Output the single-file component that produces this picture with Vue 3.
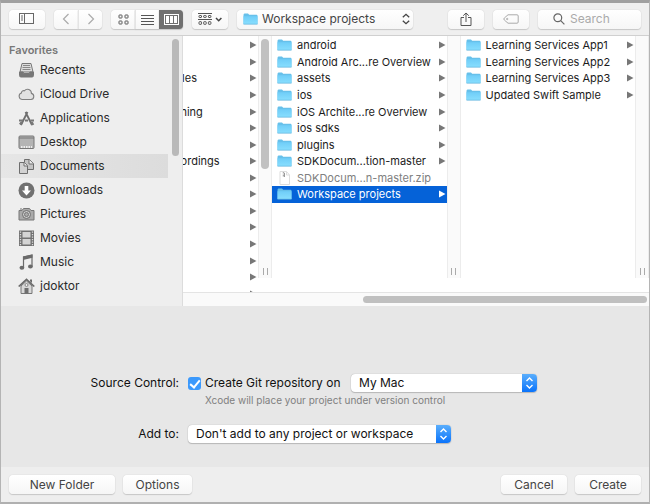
<script setup>
import { ref } from 'vue'

const favorites = [
  { name: 'Recents', icon: '<path d="M4 1.5h9l2 8.5H2z" fill="#ddd" stroke="#777"/><path d="M5 3.5h7M4.500 5.500h8M4.500 7.500h8" stroke="#888"/><path d="M1.500 10h3.500l1 1.500h5l1-1.500h3.500v3.500q0 1.500-1.500 1.500h-11q-1.500 0-1.500-1.500z" fill="#777" stroke="#777"/>' },
  { name: 'iCloud Drive', icon: '<path d="M4 13.500a3.300 3.300 0 0 1-.6-6.400 2.300 2.300 0 0 1 3-2.300 3.900 3.900 0 0 1 7 2.600 3.100 3.100 0 0 1-.4 6.100z" fill="#e2e2e2" stroke="#808080" stroke-width="1.100"/>' },
  { name: 'Applications', icon: '<path d="M9.500 2 3 15M7.500 2l6.500 13" stroke="#6e6e6e" stroke-width="1.800"/><path d="M1 10.500h4M7 10.500h3M12.500 10.500H16" stroke="#777" stroke-width="2"/><path d="M2 14.500 4 12M15 15l-1.500-3" stroke="#777" stroke-width="2.600"/>' },
  { name: 'Desktop', icon: '<rect x="1" y="2" width="15" height="12.500" rx="1" fill="#b4b4b4" stroke="#777"/><path d="M1 4h15" stroke="#777"/><path d="M3 13h11" stroke="#fff" stroke-width="1.500" stroke-dasharray="1.500 1"/>' },
  { name: 'Documents', icon: '<path d="M6.500 1.500h5l4 4v6h-9z" fill="#c4c4c4" stroke="#6e6e6e"/><path d="M11 1.500V6h4.500" stroke="#6e6e6e" fill="#eee"/><path d="M1.500 4.500h5l3 3v8h-8z" fill="#d2d2d2" stroke="#6e6e6e"/><path d="M6 4.500V8h3.500" stroke="#6e6e6e" fill="#eee"/>' },
  { name: 'Downloads', icon: '<circle cx="8.500" cy="8.500" r="8" fill="#717171"/><path d="M6.700 4h3.600v4.500h2.700l-4.500 5L4 8.500h2.700z" fill="#fff"/>' },
  { name: 'Pictures', icon: '<path d="M1 4.500h3l1.500-2h6l1.500 2h3v9.500H1z" fill="#aaa" stroke="#777"/><path d="M2 3h2" stroke="#777"/><circle cx="8.500" cy="8.500" r="4" fill="#ccc" stroke="#6e6e6e"/><circle cx="8.500" cy="8.500" r="2" fill="#aaa" stroke="#777"/>' },
  { name: 'Movies', icon: '<rect x="1" y="0.500" width="15" height="15.500" fill="#717171"/><path d="M4.500 2h8v5.500h-8zM4.500 9h8v5.500h-8z" fill="#d4d4d4"/><path d="M2.500 1.500v14M14.500 1.500v14" stroke="#ddd" stroke-width="1.300" stroke-dasharray="1.300 1.200"/>' },
  { name: 'Music', icon: '<path d="M5.500 13.500V3l8.500-2v11.500" stroke="#6a6a6a" stroke-width="1.200"/><path d="M5 2.600 14.500.500v3.300L5 6z" fill="#6a6a6a"/><ellipse cx="3.900" cy="13.700" rx="2.400" ry="2" fill="#6a6a6a"/><ellipse cx="12.400" cy="12.400" rx="2.400" ry="2" fill="#6a6a6a"/>' },
  { name: 'jdoktor', icon: '<path d="M3 8v7.500h11V8L8.500 3z" fill="#d8d8d8" stroke="#777"/><path d="M.7 8.500 8.500 1.300l7.800 7.200" stroke="#6a6a6a" stroke-width="1.700"/><path d="M12 1.500h2v3.500l-2-1.700z" fill="#6a6a6a"/><rect x="6.500" y="10" width="4" height="5.500" fill="#6e6e6e"/><circle cx="8.500" cy="7" r="1.500" fill="#eee" stroke="#888"/>' },
]
const activeFavorite = ref('Documents')

// This column is scrolled, so only the ends of its longer names show.
const parentRows = ['', '', 'Apples', '', 'Training', '', '', 'Recordings', '', '', '', '', '', '', '', '']

const projectRows = [
  { name: 'android' },
  { name: 'Android Arc...re Overview' },
  { name: 'assets' },
  { name: 'ios' },
  { name: 'iOS Archite...re Overview' },
  { name: 'ios sdks' },
  { name: 'plugins' },
  { name: 'SDKDocum...tion-master' },
  { name: 'SDKDocum...n-master.zip', file: true },
  { name: 'Workspace projects' },
]
const selectedProject = ref('Workspace projects')

const workspaceRows = [
  { name: 'Learning Services App1' },
  { name: 'Learning Services App2' },
  { name: 'Learning Services App3' },
  { name: 'Updated Swift Sample' },
]

const search = ref('')
const useGit = ref(true)
</script>

<template>
  <main class="dialog">
    <svg class="defs" aria-hidden="true">
      <defs>
        <linearGradient id="folderFill" x1="0" y1="0" x2="0" y2="1">
          <stop offset="0" stop-color="#6fcdf8" />
          <stop offset="1" stop-color="#88defe" />
        </linearGradient>
        <symbol id="folder" viewBox="0 0 15 12">
          <path d="M.5 2Q.5.500 1.500.500h3.500l1.200 1.300h7.300q1 0 1 1v8.200h-14z" fill="#67c0ea" />
          <path d="M.5 3.200h14v7.800h-14z" fill="url(#folderFill)" />
          <path d="M.5 11.200h14" stroke="#63b7df" stroke-width=".8" />
        </symbol>
      </defs>
    </svg>

    <header class="toolbar">
      <button class="btn tool" aria-label="Toggle sidebar">
        <svg width="16" height="12" fill="none" stroke="#666">
          <rect x=".5" y=".5" width="14" height="10" />
          <path d="M5.500.500v10" /><path d="M2 3h2M2 5h2M2 7h2" />
        </svg>
      </button>
      <div class="group">
        <button class="btn half" aria-label="Back">
          <svg width="8" height="12" fill="none" stroke="#aaa" stroke-width="1.200"><path d="M6.500 1 1.500 6l5 5" /></svg>
        </button>
        <button class="btn half" aria-label="Forward">
          <svg width="8" height="12" fill="none" stroke="#aaa" stroke-width="1.200"><path d="m1.500 1 5 5-5 5" /></svg>
        </button>
      </div>
      <div class="group">
        <button class="btn half" aria-label="Icon view">
          <svg width="11" height="11" fill="none" stroke="#555">
            <rect x="1" y="1" width="3" height="3" rx=".5" /><rect x="7" y="1" width="3" height="3" rx=".5" />
            <rect x="1" y="7" width="3" height="3" rx=".5" /><rect x="7" y="7" width="3" height="3" rx=".5" />
          </svg>
        </button>
        <button class="btn half" aria-label="List view">
          <svg width="13" height="11" stroke="#555"><path d="M0 1.500h13M0 4.500h13M0 7.500h13M0 10.500h13" /></svg>
        </button>
        <button class="btn half on" aria-label="Column view" aria-pressed="true">
          <svg width="15" height="11">
            <rect x=".5" y=".5" width="14" height="10" fill="none" stroke="#fff" />
            <path d="M2 2h3v7H2zM6 2h3v7H6zM10 2h3v7h-3z" fill="#fff" />
          </svg>
        </button>
      </div>
      <button class="btn tool" aria-label="Group items">
        <svg width="25" height="13" fill="none" stroke="#555">
          <path d="M0 .5h14M0 6.500h14" />
          <rect x="1" y="2.500" width="2.500" height="2" rx=".5" /><rect x="5.700" y="2.500" width="2.500" height="2" rx=".5" /><rect x="10.400" y="2.500" width="2.500" height="2" rx=".5" />
          <rect x="1" y="8.700" width="2.500" height="2.600" rx=".5" /><rect x="5.700" y="8.700" width="2.500" height="2.600" rx=".5" /><rect x="10.400" y="8.700" width="2.500" height="2.600" rx=".5" />
          <path d="m18 5 2.700 2.700L23.400 5" stroke="#444" stroke-width="1.500" />
        </svg>
      </button>
      <div class="location btn">
        <svg class="folder" width="15" height="12"><use href="#folder" /></svg>
        <select aria-label="Location"><option>Workspace projects</option></select>
        <svg class="updown" width="8" height="12" fill="none" stroke="#444" stroke-width="1.300"><path d="m.8 4.300 3.200-3 3.200 3M.8 7.700l3.200 3 3.200-3" /></svg>
      </div>
      <button class="btn tool share" aria-label="Share">
        <svg width="12" height="14" fill="none" stroke="#555">
          <path d="M4 5.500H1v8h10v-8H8" /><path d="M6 10V1M3.200 3.700 6 1l2.800 2.700" />
        </svg>
      </button>
      <button class="btn tool" aria-label="Tags">
        <svg width="16" height="10" fill="none" stroke="#aaa">
          <path d="M5 .8h9q1.200 0 1.200 1.200v6q0 1.200-1.200 1.200H5L1.300 6q-1-1 0-2z" /><circle cx="4.200" cy="5" r=".7" />
        </svg>
      </button>
      <label class="btn search">
        <svg width="12" height="12" fill="none" stroke="#666" stroke-width="1.200"><circle cx="4.800" cy="4.800" r="3.900" /><path d="m7.700 7.700 3.700 3.700" /></svg>
        <input v-model="search" type="text" placeholder="Search" aria-label="Search" />
      </label>
    </header>

    <section class="browser">
      <nav class="sidebar">
        <div class="places">
          <h2>Favorites</h2>
          <a
            v-for="f in favorites"
            :key="f.name"
            href="#"
            :class="{ active: f.name === activeFavorite }"
            @click.prevent="activeFavorite = f.name"
          >
            <svg width="17" height="17" fill="none" v-html="f.icon"></svg>{{ f.name }}
          </a>
        </div>
        <div class="side-track"><i></i></div>
      </nav>

      <div class="files">
        <div class="columns">
          <ul class="column parent">
            <li v-for="(name, i) in parentRows" :key="i">
              <span>{{ name }}</span>
              <svg class="arrow" width="7" height="8"><path d="M0 .5 6.500 4 0 7.500z" /></svg>
            </li>
          </ul>
          <div class="track"><i class="thumb"></i><b></b></div>
          <ul class="column">
            <li
              v-for="r in projectRows"
              :key="r.name"
              :class="{ selected: r.name === selectedProject, file: r.file }"
              @click="selectedProject = r.name"
            >
              <svg v-if="!r.file" class="folder" width="15" height="12"><use href="#folder" /></svg>
              <svg v-else class="folder" width="15" height="14" fill="none">
                <path d="M3 .5h6.500L12.500 4v9.500H3z" fill="#fff" stroke="#ddd" /><path d="M9.500.500V4h3" stroke="#ddd" />
                <path d="M6.500 1v5" stroke="#aaa" stroke-width="1.500" stroke-dasharray="1 .5" /><path d="M7.500 2v4" stroke="#999" />
              </svg>
              <span>{{ r.name }}</span>
              <svg v-if="!r.file" class="arrow" width="7" height="8"><path d="M0 .5 6.500 4 0 7.500z" /></svg>
            </li>
          </ul>
          <div class="track"><b></b></div>
          <ul class="column">
            <li v-for="r in workspaceRows" :key="r.name">
              <svg class="folder" width="15" height="12"><use href="#folder" /></svg>
              <span>{{ r.name }}</span>
              <svg class="arrow" width="7" height="8"><path d="M0 .5 6.500 4 0 7.500z" /></svg>
            </li>
          </ul>
          <div class="track"><b></b></div>
        </div>
        <div class="h-track"><i></i></div>
      </div>
    </section>

    <form class="options" @submit.prevent>
      <label class="caption" for="git">Source Control:</label>
      <div class="field">
        <input id="git" v-model="useGit" class="check" type="checkbox" />
        <label class="git-label" for="git">Create Git repository on</label>
        <div class="popup host">
          <select aria-label="Repository location"><option>My Mac</option></select>
          <svg class="stepper" width="15" height="18" fill="none" stroke="#fff" stroke-width="1.400"><path d="m4.500 7 3-3 3 3M4.500 11l3 3 3-3" /></svg>
        </div>
      </div>
      <p class="hint">Xcode will place your project under version control</p>
      <label class="caption" for="add">Add to:</label>
      <div class="popup project">
        <select id="add"><option>Don't add to any project or workspace</option></select>
        <svg class="stepper" width="15" height="18" fill="none" stroke="#fff" stroke-width="1.400"><path d="m4.500 7 3-3 3 3M4.500 11l3 3 3-3" /></svg>
      </div>
    </form>

    <footer class="footer">
      <button class="btn wide">New Folder</button>
      <button class="btn medium">Options</button>
      <span class="spacer"></span>
      <button class="btn action">Cancel</button>
      <button class="btn action">Create</button>
    </footer>
  </main>
</template>

<style>
body {
  margin: 0;
}
</style>

<style scoped>
* {
  box-sizing: border-box;
}
.dialog {
  display: flex;
  flex-direction: column;
  min-height: 100vh;
  border: 1px solid #b4b4b4;
  border-top: 3px solid #a0a0a0;
  border-bottom: 2px solid #b0b0b0;
  background: #eee;
  color: #1c1c1c;
  font: 12px/16px Inter, "Liberation Sans", sans-serif;
}
.defs {
  position: absolute;
  width: 0;
  height: 0;
}
svg {
  display: block;
  flex: none;
}
button,
input,
select {
  margin: 0;
  padding: 0;
  border: 0;
  font: inherit;
  color: inherit;
  background: none;
  outline: none;
}
select {
  appearance: none;
  flex: 1;
  min-width: 0;
}
.btn {
  display: flex;
  align-items: center;
  justify-content: center;
  height: 19px;
  border-radius: 4px;
  background: linear-gradient(#fff, #f6f6f6);
  box-shadow: 0 0 1px #bbb, 0 1px 1px #c8c8c8;
  color: #444;
}
.toolbar {
  display: flex;
  align-items: center;
  gap: 9px;
  height: 33px;
  padding: 0 8px;
  border-bottom: 1px solid #d0d0d0;
  background: #efefef;
}
.tool {
  width: 36px;
}
.group {
  display: flex;
  border-radius: 4px;
}
.half {
  width: 24px;
}
.half:not(:first-child) {
  border-left: 1px solid #e4e4e4;
  border-top-left-radius: 0;
  border-bottom-left-radius: 0;
}
.half:not(:last-child) {
  border-top-right-radius: 0;
  border-bottom-right-radius: 0;
}
.half.on {
  border-color: #707070;
  background: #707070;
}
.location {
  gap: 4px;
  width: 176px;
  padding: 0 3px 0 6px;
}
.share {
  margin-left: auto;
}
.search {
  gap: 5px;
  width: 103px;
  padding-left: 15px;
}
.search input {
  flex: 1;
  min-width: 0;
}
.search input::placeholder {
  color: #aaa;
  opacity: 1;
}
.browser {
  display: flex;
  height: 270px;
}
.sidebar {
  display: flex;
  flex: none;
  width: 182px;
  border-right: 1px solid #dcdcdc;
  background: #eee;
}
.places {
  flex: 1;
}
.places h2 {
  margin: 0;
  padding: 6px 0 0 8px;
  font-size: 11px;
  font-weight: 600;
  line-height: 16px;
  color: #777;
}
.places a {
  display: flex;
  align-items: center;
  gap: 5px;
  height: 24px;
  padding-left: 17px;
  color: #2a2a2a;
  text-decoration: none;
}
.places .active {
  background: linear-gradient(90deg, #e6e6e6, #dcdcdc);
}
.side-track {
  width: 14px;
  padding: 3px 3px 0 4px;
}
.side-track i {
  display: block;
  height: 117px;
  border-radius: 4px;
  background: #b9b9b9;
}
.files {
  display: flex;
  flex: 1;
  flex-direction: column;
  min-width: 0;
}
.columns {
  display: flex;
  flex: 1;
  min-height: 0;
  overflow: hidden;
  background: #fff;
}
.column {
  display: grid;
  flex: 1;
  grid-template-rows: repeat(16, 1fr);
  min-width: 0;
  height: 266px;
  margin: 0;
  padding: 1px 0 0;
  list-style: none;
  font-size: 11px;
}
.parent {
  flex: none;
  width: 97px;
  margin-left: -22px;
}
.column li {
  display: flex;
  align-items: center;
  gap: 5px;
  min-height: 0;
  padding: 0 1px 0 5px;
  white-space: nowrap;
}
.parent li {
  padding-left: 0;
}
.column li span {
  flex: 1;
  min-width: 0;
}
.arrow {
  fill: #777;
}
.column .selected {
  background: #0562d8;
  color: #fff;
}
.selected .arrow {
  fill: #fff;
}
.column .file {
  color: #808080;
}
.track {
  position: relative;
  display: flex;
  flex: none;
  flex-direction: column;
  justify-content: space-between;
  align-items: center;
  width: 14px;
  height: 242px;
  padding: 3px 0;
  border: 0 solid #ececec;
  border-width: 0 1px;
  background: #fafafa;
}
.track .thumb {
  width: 8px;
  height: 130px;
  border-radius: 4px;
  background: #c1c1c1;
}
.track b {
  width: 5px;
  height: 7px;
  margin-top: auto;
  border: 0 solid #aaa;
  border-width: 0 1px;
}
.h-track {
  height: 14px;
  padding: 3px 2px 0 180px;
  border-top: 1px solid #e4e4e4;
  background: #fafafa;
}
.h-track i {
  display: block;
  height: 7px;
  border-radius: 4px;
  background: #c0c0c0;
}
.options {
  display: grid;
  flex: 1;
  grid-template-columns: 178px 1fr;
  align-content: start;
  align-items: center;
  column-gap: 9px;
  padding-top: 68px;
  background: #e7e7e7;
  color: #111;
}
.caption {
  text-align: right;
}
.field {
  display: flex;
  align-items: center;
}
.check {
  appearance: none;
  width: 13px;
  height: 13px;
  border-radius: 3px;
  background: #fff;
}
.check:checked {
  background: #3b99fc;
}
.check:checked::after {
  content: "";
  display: block;
  width: 4px;
  height: 8px;
  margin: 1px 0 0 4px;
  border: solid #fff;
  border-width: 0 2px 2px 0;
  transform: rotate(40deg);
}
.git-label {
  flex: none;
  width: 146px;
  margin-left: 4px;
  white-space: nowrap;
}
.popup {
  display: flex;
  height: 18px;
  overflow: hidden;
  border-radius: 4px;
  background: #fff;
  box-shadow: 0 0 1px #999, 0 1px 1px #bbb;
}
.popup select {
  padding-left: 8px;
}
.host {
  width: 186px;
}
.project {
  width: 263px;
}
.stepper {
  background: linear-gradient(#5aaefc, #0a73fb);
}
.hint {
  grid-column: 2;
  margin: 0;
  padding: 0 0 17px 17px;
  font-size: 10px;
  color: #808080;
}
.footer {
  display: flex;
  align-items: center;
  gap: 8px;
  height: 35px;
  padding: 0 8px;
  background: #eee;
}
.wide {
  width: 106px;
}
.medium {
  width: 69px;
}
.action {
  width: 66px;
}
.spacer {
  flex: 1;
}
</style>
